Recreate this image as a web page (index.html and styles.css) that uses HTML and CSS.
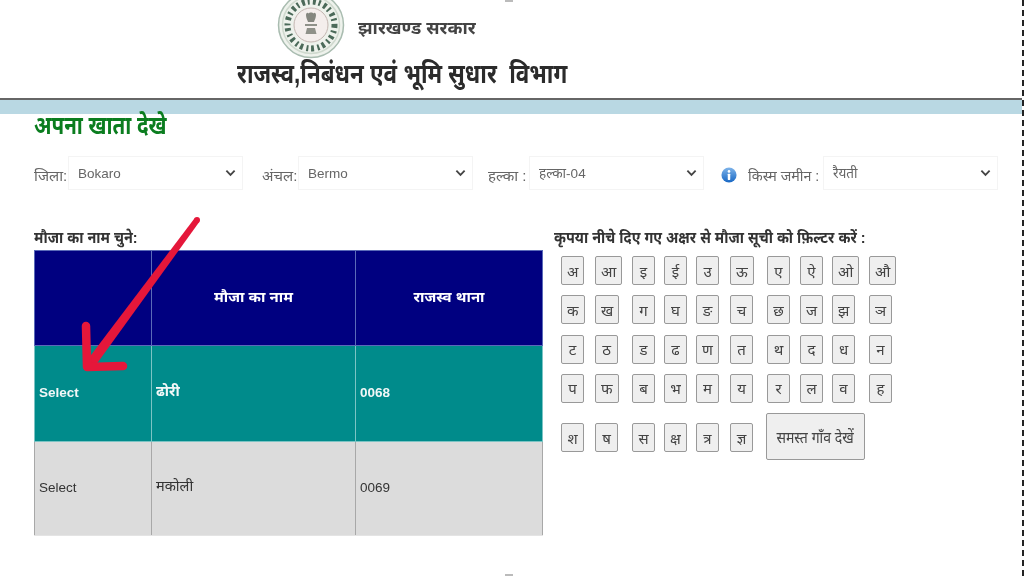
FILE: index.html
```html
<!DOCTYPE html>
<html lang="hi">
<head>
<meta charset="utf-8">
<title>अपना खाता देखे</title>
<link rel="stylesheet" href="styles.css">
</head>
<body>
<div class="page">
  <header class="header">
    <div class="brand">
      <svg class="emblem" viewBox="0 0 68 68" aria-hidden="true">
        <circle cx="34" cy="34" r="32.5" fill="#eef2ec" stroke="#a9bcb0" stroke-width="1.5"/>
        <circle cx="34" cy="34" r="23.500" fill="none" stroke="#4b6a59" stroke-width="6" stroke-dasharray="3 2.800 2 3.400"/>
        <circle cx="34" cy="34" r="28.5" fill="none" stroke="#cfd9ce" stroke-width="1.5"/>
        <circle cx="34" cy="34" r="17" fill="#f4eeec" stroke="#c4b6b1"/>
        <path d="M29 24c0-2 2-3 2.500-1.500.5-1.500 4.500-1.500 5 0 .5-1.500 2.500-.5 2.500 1.500 0 3-1.500 5-2 7h-6c-.5-2-2-4-2-7z" fill="#85877f"/>
        <path d="M28 33h12v2H28zM30 37h8l1.500 6h-11z" fill="#8f9189"/>
      </svg>
      <span class="state">झारखण्ड सरकार</span>
    </div>
    <div class="dept"><span class="dept-text">राजस्व,निबंधन एवं भूमि सुधार&nbsp; विभाग</span></div>
  </header>
  <div class="band"></div>
  <main class="content">
    <h1 class="title"><span class="title-text">अपना खाता देखे</span></h1>
    <div class="filters">
      <span class="label">जिला:</span>
      <div class="select"><span>Bokaro</span><svg class="chev" viewBox="0 0 12 8"><path d="M1.500 1.500 6 6l4.500-4.500" fill="none" stroke="#444" stroke-width="2"/></svg></div>
      <span class="label l-b">अंचल:</span>
      <div class="select"><span>Bermo</span><svg class="chev" viewBox="0 0 12 8"><path d="M1.500 1.500 6 6l4.500-4.500" fill="none" stroke="#444" stroke-width="2"/></svg></div>
      <span class="label l-c">हल्का :</span>
      <div class="select"><span>हल्का-04</span><svg class="chev" viewBox="0 0 12 8"><path d="M1.500 1.500 6 6l4.500-4.500" fill="none" stroke="#444" stroke-width="2"/></svg></div>
      <svg class="info" viewBox="0 0 18 18" aria-hidden="true">
        <defs><linearGradient id="ig" x1="0" y1="0" x2="0" y2="1"><stop offset="0" stop-color="#7fb4ea"/><stop offset="1" stop-color="#1767c4"/></linearGradient></defs>
        <circle cx="9" cy="9" r="8.500" fill="url(#ig)"/>
        <circle cx="9" cy="5" r="1.500" fill="#fff"/>
        <rect x="7.600" y="7.500" width="2.800" height="7" rx=".6" fill="#fff"/>
      </svg>
      <span class="label l-d"><span class="narrow">किस्म जमीन :</span></span>
      <div class="select"><span>रैयती</span><svg class="chev" viewBox="0 0 12 8"><path d="M1.500 1.500 6 6l4.500-4.500" fill="none" stroke="#444" stroke-width="2"/></svg></div>
    </div>
    <div class="columns">
      <section class="left">
        <div class="heading"><span class="narrow">मौजा का नाम चुने:</span></div>
        <table class="grid">
          <colgroup><col class="c1"><col class="c2"><col class="c3"></colgroup>
          <thead>
            <tr><th></th><th>मौजा का नाम</th><th>राजस्व थाना</th></tr>
          </thead>
          <tbody>
            <tr class="sel"><td>Select</td><td class="hi">ढोरी</td><td>0068</td></tr>
            <tr class="alt"><td>Select</td><td class="hi">मकोली</td><td>0069</td></tr>
          </tbody>
        </table>
      </section>
      <section class="right">
        <div class="heading"><span class="narrow">कृपया नीचे दिए गए अक्षर से मौजा सूची को फ़िल्टर करें :</span></div>
        <div class="letters">
          <button>अ</button><button>आ</button><button>इ</button><button>ई</button><button>उ</button><button>ऊ</button><button>ए</button><button>ऐ</button><button>ओ</button><button>औ</button>
          <button>क</button><button>ख</button><button>ग</button><button>घ</button><button>ङ</button><button>च</button><button>छ</button><button>ज</button><button>झ</button><button>ञ</button>
          <button>ट</button><button>ठ</button><button>ड</button><button>ढ</button><button>ण</button><button>त</button><button>थ</button><button>द</button><button>ध</button><button>न</button>
          <button>प</button><button>फ</button><button>ब</button><button>भ</button><button>म</button><button>य</button><button>र</button><button>ल</button><button>व</button><button>ह</button>
          <button class="last">श</button><button class="last">ष</button><button class="last">स</button><button class="last">क्ष</button><button class="last">त्र</button><button class="last">ज्ञ</button><button class="all"><span class="all-text">समस्त गाँव देखें</span></button>
        </div>
      </section>
    </div>
  </main>
  <svg class="arrow" viewBox="0 0 130 160" aria-hidden="true">
    <path d="M123.400 5.800 17 153 9 147 118.600 2.200z" fill="#e5173a"/>
    <circle cx="121" cy="4" r="3" fill="#e5173a"/>
    <path d="M10 110l1 41 36-1" fill="none" stroke="#e5173a" stroke-width="8.500" stroke-linecap="round" stroke-linejoin="round"/>
  </svg>
  <i class="handle h-top"></i>
  <i class="handle h-bottom"></i>
</div>
</body>
</html>
```

FILE: styles.css
```css
* { box-sizing: border-box; }
html, body { margin: 0; padding: 0; background: #fff; }
body { font-family: "Liberation Sans", "Noto Sans", sans-serif; color: #333; overflow: hidden; }
.page { position: relative; width: 1024px; height: 576px; border-right: 2px dashed #222; overflow: hidden; filter: blur(.35px); }

.header { height: 100px; border-bottom: 2px solid #666; position: relative; }
.brand { display: flex; align-items: center; height: 56px; padding-left: 277px; }
.emblem { width: 68px; height: 68px; margin-top: -7px; flex: none; }
.state { margin-left: 13px; margin-top: -2px; font-size: 18px; font-weight: bold; color: #444; }
.dept { padding: 2px 0 0 237px; font-size: 27px; line-height: 32px; font-weight: bold; color: #2b2b2b; white-space: nowrap; }
.dept-text { display: inline-block; transform: scaleX(.83); transform-origin: left center; }

.band { height: 14px; background: #b9d8e3; }

.title { margin: -1px 0 1px 34px; height: 42px; font-size: 26px; line-height: 24px; font-weight: bold; color: #0b7d1f; }
.title-text { display: inline-block; transform: scaleX(.79); transform-origin: left center; }

.filters { display: flex; align-items: center; height: 34px; padding-left: 34px; font-size: 15px; color: #666; }
.label { width: 30px; padding-top: 4px; white-space: nowrap; }
.narrow { display: inline-block; transform: scaleX(.95); transform-origin: left center; }
.select { display: flex; align-items: center; justify-content: space-between; width: 175px; height: 34px; margin-left: 4px; padding: 0 6px 0 9px; border: 1px solid #f4f4f4; font-size: 13.500px; color: #666; }
.chev { width: 11px; height: 8px; }
.l-b { margin-left: 19px; width: 32px; }
.l-c { margin-left: 15px; width: 37px; }
.info { width: 16px; height: 16px; margin-left: 17px; margin-top: 4px; flex: none; }
.l-d { margin-left: 11px; width: 71px; }

.columns { display: flex; margin-top: 36px; }
.left { width: 509px; margin-left: 34px; flex: none; }
.right { margin-left: 11px; }
.heading { height: 24px; font-size: 15.500px; line-height: 24px; font-weight: bold; color: #333; white-space: nowrap; }
.heading .narrow { transform: scaleX(.93); }

.grid { width: 508px; height: 284px; border-collapse: collapse; table-layout: fixed; font-size: 13.500px; }
.c1 { width: 117px; }
.c2 { width: 204px; }
.c3 { width: 187px; }
.grid th, .grid td { padding: 0 4px 3px; border: 1px solid #c9d4e4; height: 95px; }
.grid th { background: #000080; color: #fff; font-size: 15px; font-weight: bold; text-align: center; padding: 0 5px 4px; border-color: #5a6ab8; }
.sel td { height: 96px; background: #008b8b; color: #f2f7f7; font-weight: bold; border-color: #7cc4c4; }
.alt td { height: 94px; background: #dcdcdc; color: #333; border-color: #a8a8a8; border-bottom-color: #e4e4e4; }
.grid .hi { font-size: 14.500px; padding-bottom: 7px; }

.letters { display: grid; grid-template-columns: 34px 37px 32px 32px 34px 37px 33px 32px 37px 30px; grid-auto-rows: 39.330px; margin: 6px 0 0 7px; justify-items: start; align-items: start; }
.letters button { min-width: 23px; height: 29px; padding: 0 5px; border: 1px solid #999; border-radius: 2px; background: #efefef; font-family: inherit; font-size: 15px; color: #444; white-space: nowrap; }
.letters .last { margin-top: 10px; }
.letters .all { grid-column: 7 / span 4; width: 99px; height: 47px; padding: 0; margin-left: -1px; }
.all-text { display: inline-block; font-size: 16px; transform: scaleX(.875); white-space: nowrap; }

.arrow { position: absolute; left: 76px; top: 216px; width: 130px; height: 160px; }
.handle { position: absolute; left: 505px; width: 8px; height: 2px; background: #bbb; }
.h-top { top: 0; }
.h-bottom { bottom: 0; }
```
